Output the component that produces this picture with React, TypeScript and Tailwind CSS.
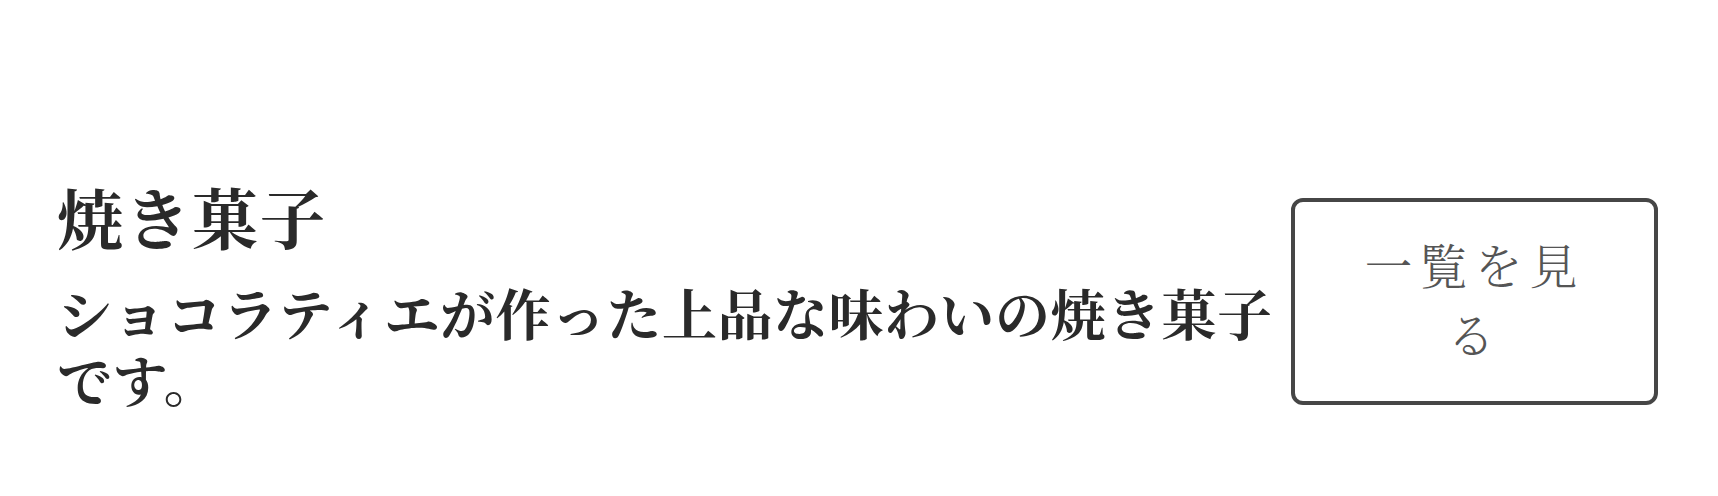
export default function App() {
  const mincho =
    '"Noto Serif CJK JP", "Noto Serif JP", "Noto Sans CJK JP", serif';
  return (
    <div className="w-full h-[496px] bg-white overflow-hidden">
      <div
        className="flex items-start pl-[57px] pr-[60px] pt-[176px]"
        style={{ fontFamily: mincho }}
      >
        <div className="w-[1234px] shrink-0 text-[#2a2a2a]">
          <h2 className="text-[66px] leading-[80px] tracking-[1.5px] font-bold">
            焼き菓子
          </h2>
          <p className="mt-[22px] text-[55px] leading-[67px] tracking-[0.5px] font-bold">
            ショコラティエが作った上品な味わいの焼き菓子です。
          </p>
        </div>
        <a
          href="#"
          className="mt-[22px] w-[367px] h-[207px] shrink-0 border-4 border-[#464646] rounded-[12px] px-[46px] pt-[27px] text-center text-[48px] leading-[69px] tracking-[7px] font-light text-[#555555]"
        >
          一覧を見る
        </a>
      </div>
    </div>
  );
}
